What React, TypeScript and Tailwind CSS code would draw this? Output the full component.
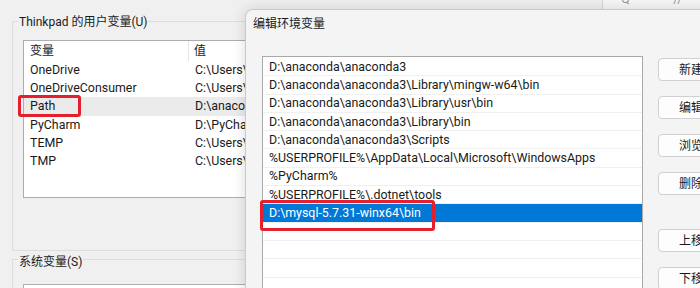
import React from 'react'

const userVars = [
  { name: 'OneDrive', value: 'C:\\Users\\Thinkpad\\OneDrive' },
  { name: 'OneDriveConsumer', value: 'C:\\Users\\Thinkpad\\OneDrive' },
  { name: 'Path', value: 'D:\\anaconda\\anaconda3;D:\\anaconda' },
  { name: 'PyCharm', value: 'D:\\PyCharm 2021.1\\bin;' },
  { name: 'TEMP', value: 'C:\\Users\\Thinkpad\\AppData' },
  { name: 'TMP', value: 'C:\\Users\\Thinkpad\\AppData' },
]

const paths = [
  'D:\\anaconda\\anaconda3',
  'D:\\anaconda\\anaconda3\\Library\\mingw-w64\\bin',
  'D:\\anaconda\\anaconda3\\Library\\usr\\bin',
  'D:\\anaconda\\anaconda3\\Library\\bin',
  'D:\\anaconda\\anaconda3\\Scripts',
  '%USERPROFILE%\\AppData\\Local\\Microsoft\\WindowsApps',
  '%PyCharm%',
  '%USERPROFILE%\\.dotnet\\tools',
  'D:\\mysql-5.7.31-winx64\\bin',
  '',
  '',
  '',
  '',
]

const buttons = [
  { label: '新建', gap: 'mt-[2px]' },
  { label: '编辑', gap: 'mt-[15px]' },
  { label: '浏览', gap: 'mt-[15px]' },
  { label: '删除', gap: 'mt-[15px]' },
  { label: '上移', gap: 'mt-[34px]' },
  { label: '下移', gap: 'mt-[15px]' },
]

export default function App() {
  return (
    <div className="relative h-[288px] w-[700px] overflow-hidden bg-[#f0f0f0] text-[12.4px] leading-[16px] text-[#1a1a1a] font-['Roboto','Noto_Sans_CJK_SC',sans-serif]">
      {/* background window: user variables */}
      <div className="pl-[12px] pt-[21px]">
        <div className="relative h-[230px] w-[640px] border border-[#dcdcdc]">
          <span className="absolute -top-[8px] left-[5px] bg-[#f0f0f0] px-[1px] text-[12px] leading-[16px]">
            Thinkpad 的用户变量(U)
          </span>
          <div className="ml-[10px] mt-[18px] h-[158px] w-[560px] border border-[#adadad] bg-white">
            <div className="flex h-[20px] items-center text-[12px]">
              <div className="flex h-full w-[165px] items-center border-r border-[#e5e5e5] pl-[6px]">变量</div>
              <div className="pl-[5px]">值</div>
            </div>
            {userVars.map((v) => (
              <div
                key={v.name}
                className={`flex h-[18.2px] items-center ${v.name === 'Path' ? 'bg-[#ebebeb]' : ''}`}
              >
                <div className="w-[165px] pl-[6px]">{v.name}</div>
                <div className="pl-[6px] whitespace-nowrap">{v.value}</div>
              </div>
            ))}
          </div>
        </div>
        <div className="relative mt-[8px] h-[60px] w-[640px] border border-[#dcdcdc]">
          <span className="absolute -top-[6px] left-[5px] bg-[#f0f0f0] px-[1px] text-[12px] leading-[16px]">
            系统变量(S)
          </span>
          <div className="ml-[10px] mt-[24px] h-[60px] w-[560px] border border-[#adadad] bg-white" />
        </div>
      </div>

      {/* window strip behind the dialog, top right */}
      <div className="absolute left-[602px] top-0 h-[9px] w-[98px] overflow-hidden border-l border-[#d8d8d8] bg-[#f7f7f7]">
        <div className="-mt-[9px] flex gap-[20px] pl-[18px] text-[13px] leading-[16px] text-[#9a9a9a]">
          <span>Q</span>
          <span>·</span>
          <span>//</span>
        </div>
      </div>

      {/* red annotation around Path */}
      <div className="absolute left-[18px] top-[95px] h-[22px] w-[63px] rounded-[3px] border-[3px] border-[#e3202b]" />

      {/* edit dialog */}
      <div className="absolute left-[245px] top-[9px] h-[300px] w-[480px] rounded-tl-[8px] border border-[#c9c9c9] bg-[#f4f4f4] shadow-[0_0_14px_rgba(0,0,0,0.14)]">
        <div className="pl-[7px] pt-[6px] text-[12px] leading-[16px]">编辑环境变量</div>
        <div className="ml-[16px] mt-[24px] flex">
          <div className="h-[260px] w-[384px] border border-[#a9a9a9] bg-white pt-[1px]">
            {paths.map((p, i) => (
              <div
                key={i}
                className={`flex h-[18.3px] items-center border-b border-[#f0f0f0] pl-[6px] whitespace-nowrap ${
                  i === 8 ? 'border-[#0078d7] bg-[#0078d7] text-white' : ''
                }`}
              >
                {p}
              </div>
            ))}
          </div>
          <div className="ml-[15px] flex flex-col text-[12px]">
            {buttons.map((b) => (
              <div
                key={b.label}
                className={`${b.gap} flex h-[23px] w-[66px] items-center justify-center rounded-[4px] border border-[#d0d0d0] bg-[#fdfdfd]`}
              >
                {b.label}
              </div>
            ))}
          </div>
        </div>
      </div>

      {/* red annotation around mysql row */}
      <div className="absolute left-[260px] top-[200px] h-[31px] w-[175px] rounded-[3px] border-[3px] border-[#e3202b]" />
    </div>
  )
}
